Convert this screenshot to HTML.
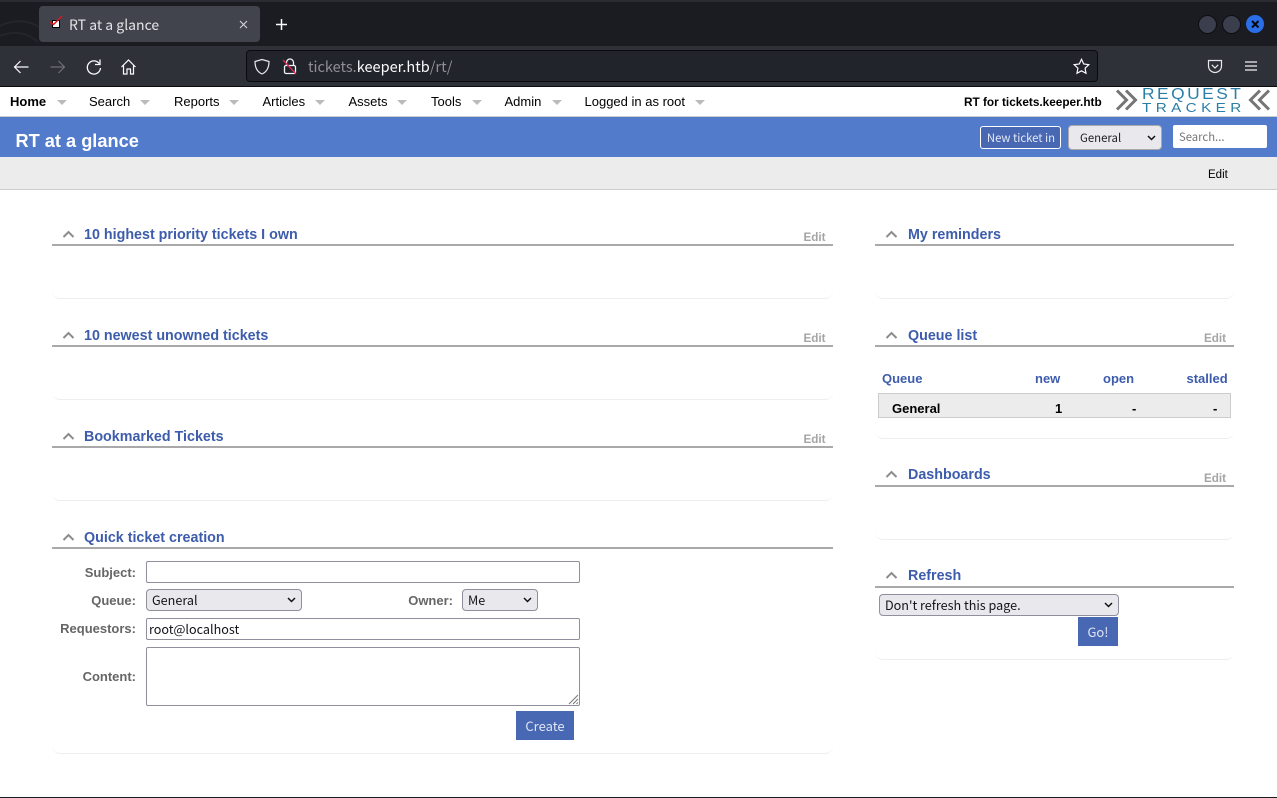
<!DOCTYPE html>
<html lang="en"><head><meta charset="utf-8"><title>RT at a glance</title>
<style>
html,body{margin:0;padding:0;width:1277px;height:798px;overflow:hidden;background:#fff;font-family:"Liberation Sans",Arial,sans-serif}
.a{position:absolute;white-space:nowrap}
.ui{font-family:"Noto Sans CJK JP","Liberation Sans",sans-serif}
a{text-decoration:none;color:inherit}
.nav{top:93px;height:17px;line-height:17px;font-size:13px;color:#000}
.tri{position:absolute;top:100px;width:0;height:0;border-left:5px solid transparent;border-right:5px solid transparent;border-top:5px solid #bbb}
.t{height:18px;line-height:18px;font-size:14.3px;font-weight:bold;color:#3d5cab}
.rule{position:absolute;height:2px;background:#a9a9a9}
.foot{position:absolute;height:10px;border-bottom:1px solid #eee;border-radius:0 0 8px 8px;box-sizing:border-box}
.edit{font-size:11.7px;font-weight:bold;color:#a5a5a5;height:14px;line-height:14px}
.lbl{font-size:13px;font-weight:bold;color:#666;text-align:right;height:16px;line-height:16px}
.f{position:absolute;box-sizing:border-box;border:1px solid #8f8f9d;border-radius:2px;background:#fff;margin:0;padding:0 2px;font:12.6px/18px "Noto Sans CJK JP","Liberation Sans",sans-serif;color:#15141a;outline:none}
select.f{appearance:none;-webkit-appearance:none;background:#e9e9ed;border-radius:4px;padding:0 5px}
.btn{position:absolute;box-sizing:border-box;background:#4868b3;color:#dfe5f3;text-align:center;font:13px/29px "Noto Sans CJK JP","Liberation Sans",sans-serif;border:0;padding:0;margin:0}
.q{font-size:13px;font-weight:bold;height:16px;line-height:16px}
svg{position:absolute;overflow:visible}
</style></head><body>

<!-- Browser chrome -->
<div class="a" style="left:0;top:0;width:1277px;height:46px;background:#1b1c22"></div>
<div class="a" style="left:0;top:0;width:1277px;height:2px;background:#2b2c33"></div>
<svg style="left:0;top:0" width="120" height="46" fill="none" stroke="#24252b" stroke-width="2"><path d="M0 26C14 19 28 20 39 27M0 36C14 30 28 33 38 42"/></svg>
<div class="a" style="left:39px;top:6px;width:221px;height:36px;background:#42444d;border-radius:4px"></div>
<svg style="left:49px;top:15px" width="16" height="16"><rect x="3.500" y="5.500" width="7" height="7" fill="#fff" stroke="#000"/><path d="M1 7l3.500 2.500L13 1" fill="none" stroke="#e0141c" stroke-width="1.500"/></svg>
<div class="a ui" style="left:69px;top:15px;height:20px;line-height:20px;font-size:14px;color:#e4e4e6">RT at a glance</div>
<svg style="left:239px;top:20px" width="10" height="10" stroke="#d5d5d8" stroke-width="1.100"><path d="M1 1l7 7M8 1l-7 7"/></svg>
<svg style="left:275px;top:18px" width="13" height="13" stroke="#fbfbfe" stroke-width="1.500"><path d="M6.500 1v11M1 6.500h11"/></svg>
<div class="a" style="left:1198px;top:15px;width:17px;height:17px;border-radius:50%;background:#3b3f4d;border:1px solid #0d0d11"></div>
<div class="a" style="left:1222px;top:15px;width:17px;height:17px;border-radius:50%;background:#3b3f4d;border:1px solid #0d0d11"></div>
<div class="a" style="left:1246px;top:15px;width:18px;height:18px;border-radius:50%;background:#2a6fe8"></div>
<svg style="left:1251px;top:20px" width="9" height="9" stroke="#06080d" stroke-width="2"><path d="M1 1l6.500 6.500M7.500 1L1 7.500"/></svg>

<!-- Toolbar -->
<div class="a" style="left:0;top:46px;width:1277px;height:40px;background:#2f3138"></div>
<div class="a" style="left:0;top:86px;width:1277px;height:1px;background:#0c0c0d"></div>
<svg style="left:13px;top:58px" width="18" height="18" fill="none" stroke="#fbfbfe" stroke-width="1.200"><path d="M1.500 9h14M7.500 3L1.500 9l6 6"/></svg>
<svg style="left:49px;top:58px" width="18" height="18" fill="none" stroke="#6e6f76" stroke-width="1.200"><path d="M1.500 9h14M9.500 3l6 6-6 6"/></svg>
<svg style="left:85px;top:58px" width="18" height="18" fill="none" stroke="#fbfbfe" stroke-width="1.300"><path d="M14.200 5.500A6.600 6.600 0 1 0 15.500 10"/><path d="M15 1.500v5h-5" stroke-width="1.300"/></svg>
<svg style="left:120px;top:58px" width="18" height="18" fill="none" stroke="#fbfbfe" stroke-width="1.200"><path d="M1.500 9L8.500 2l7 7M3.500 7.500V16h3.500v-5h3.500v5H13.500V7.500"/></svg>
<div class="a" style="left:246px;top:50px;width:852px;height:32px;box-sizing:border-box;background:#22242c;border:1px solid #0b0b0d;border-radius:4px"></div>
<svg style="left:254px;top:58px" width="16" height="17" fill="none" stroke="#e8e8ea" stroke-width="1.200"><path d="M8 1.500L15 3.500C15 10 12.500 14 8 16 3.500 14 1 10 1 3.500z"/></svg>
<svg style="left:282px;top:58px" width="16" height="17" fill="none"><path d="M4.500 7V4.500a3.500 3.500 0 0 1 7 0V7" stroke="#f2f2f4" stroke-width="1.300"/><rect x="2.500" y="7.500" width="11" height="8" rx="1.500" stroke="#f2f2f4" stroke-width="1.300"/><path d="M1 2l13 14" stroke="#e22850" stroke-width="1.300"/></svg>
<div class="a ui" style="left:308px;top:56px;height:22px;line-height:22px;font-size:14.55px;color:#8f8f94">tickets.<span style="color:#fbfbfe">keeper.htb</span>/rt/</div>
<svg style="left:1073px;top:58px" width="17" height="17" fill="none" stroke="#fbfbfe" stroke-width="1.200"><path d="M8.500 1.300l2.200 4.700 5.100.7-3.700 3.500.9 5.100-4.500-2.500-4.500 2.500.9-5.100L1.200 6.700l5.100-.7z"/></svg>
<svg style="left:1207px;top:59px" width="16" height="15" fill="none" stroke="#e8e8ea" stroke-width="1.200"><path d="M1.500 1.500h13V7a6.500 6.500 0 0 1-13 0z"/><path d="M4.800 5.800L8 9l3.200-3.200"/></svg>
<svg style="left:1245px;top:61px" width="12" height="10" stroke="#f0f0f2" stroke-width="1.200"><path d="M0 1h12M0 5h12M0 9h12"/></svg>

<!-- RT top nav -->
<div class="a" style="left:0;top:87px;width:1277px;height:29px;background:#fff"></div>
<div class="a" style="left:0;top:116px;width:1277px;height:1px;background:#ccc"></div>
<a class="a nav" href="#" style="left:10px;font-weight:bold">Home</a><i class="tri" style="left:57px"></i>
<a class="a nav" href="#" style="left:89px">Search</a><i class="tri" style="left:140px"></i>
<a class="a nav" href="#" style="left:174px">Reports</a><i class="tri" style="left:229px"></i>
<a class="a nav" href="#" style="left:262.5px">Articles</a><i class="tri" style="left:315px"></i>
<a class="a nav" href="#" style="left:348.5px">Assets</a><i class="tri" style="left:397px"></i>
<a class="a nav" href="#" style="left:431px">Tools</a><i class="tri" style="left:472px"></i>
<a class="a nav" href="#" style="left:504.5px">Admin</a><i class="tri" style="left:552px"></i>
<a class="a nav" href="#" style="left:584.5px">Logged in as root</a><i class="tri" style="left:695px"></i>
<div class="a" style="left:964px;top:94px;height:16px;line-height:16px;font-size:11.8px;font-weight:bold;color:#000">RT for tickets.keeper.htb</div>
<svg style="left:1115px;top:89px" width="22" height="22" fill="none" stroke="#757575" stroke-width="3"><path d="M2 1.500l9.500 9.500L2 20.500M11 1.500l9.500 9.500L11 20.500"/></svg>
<svg style="left:1249px;top:89px" width="22" height="22" fill="none" stroke="#757575" stroke-width="3"><path d="M20 1.500L10.500 11 20 20.500M11 1.500L1.500 11 11 20.500"/></svg>
<div class="a" style="left:1142px;top:88px;height:14px;line-height:14px;font-size:15.5px;letter-spacing:2.23px;color:#2b7ea8;transform:scaleX(1.12);transform-origin:0 50%">REQUEST</div>
<div class="a" style="left:1142px;top:102px;height:13px;line-height:13px;font-size:12.5px;letter-spacing:3.6px;color:#2b7ea8;transform:scaleX(1.22);transform-origin:0 50%">TRACKER</div>

<!-- Blue header -->
<div class="a" style="left:0;top:117px;width:1277px;height:40px;background:#527bcc"></div>
<div class="a" style="left:15.5px;top:130px;height:22px;line-height:22px;font-size:18.2px;font-weight:bold;color:#fff">RT at a glance</div>
<div class="a ui" style="left:980px;top:126px;width:81px;height:23px;box-sizing:border-box;background:#4868b3;border:1px solid #fff;border-radius:3px;color:#e3e8f5;font-size:11.3px;line-height:22px;padding-left:1px;text-align:center">New ticket in</div>
<select class="f" style="left:1068px;top:125px;width:94px;height:25px;padding:1px 0 0 11px;border-color:#aaa;color:#222;font-size:11.4px"><option>General</option></select>
<svg style="left:1147px;top:135px" width="9" height="6" fill="none" stroke="#111" stroke-width="1.500"><path d="M1 1l3.500 3.500L8 1"/></svg>
<input class="f" style="left:1173px;top:125px;width:94px;height:23px;border:0;padding:0 6px;font-size:11.3px" placeholder="Search...">

<!-- Grey bar -->
<div class="a" style="left:0;top:157px;width:1277px;height:32px;background:#ececec"></div>
<div class="a" style="left:0;top:189px;width:1277px;height:1px;background:#ccc"></div>
<a class="a" href="#" style="left:1208px;top:168px;height:15px;line-height:15px;font-size:11.5px;color:#000">Edit</a>

<!-- Left column -->
<svg style="left:63px;top:230px" width="12" height="8" fill="none" stroke="#8c8c8c" stroke-width="2"><path d="M.5 7l5-5 5 5"/></svg>
<div class="a t" style="left:84px;top:226px">10 highest priority tickets I own</div>
<div class="a edit" style="left:803.5px;top:231px">Edit</div>
<div class="rule" style="left:52px;top:244px;width:781px"></div>
<div class="foot" style="left:52px;top:289px;width:781px"></div>

<svg style="left:63px;top:331px" width="12" height="8" fill="none" stroke="#8c8c8c" stroke-width="2"><path d="M.5 7l5-5 5 5"/></svg>
<div class="a t" style="left:84px;top:327px">10 newest unowned tickets</div>
<div class="a edit" style="left:803.5px;top:332px">Edit</div>
<div class="rule" style="left:52px;top:345px;width:781px"></div>
<div class="foot" style="left:52px;top:390px;width:781px"></div>

<svg style="left:63px;top:432px" width="12" height="8" fill="none" stroke="#8c8c8c" stroke-width="2"><path d="M.5 7l5-5 5 5"/></svg>
<div class="a t" style="left:84px;top:428px">Bookmarked Tickets</div>
<div class="a edit" style="left:803.5px;top:433px">Edit</div>
<div class="rule" style="left:52px;top:446px;width:781px"></div>
<div class="foot" style="left:52px;top:491px;width:781px"></div>

<svg style="left:63px;top:533px" width="12" height="8" fill="none" stroke="#8c8c8c" stroke-width="2"><path d="M.5 7l5-5 5 5"/></svg>
<div class="a t" style="left:84px;top:529px">Quick ticket creation</div>
<div class="rule" style="left:52px;top:547px;width:781px"></div>

<div class="a lbl" style="left:40px;width:96px;top:565px">Subject:</div>
<input class="f" style="left:146px;top:561px;width:434px;height:22px">
<div class="a lbl" style="left:40px;width:96px;top:593px">Queue:</div>
<select class="f" style="left:146px;top:589px;width:156px;height:22px"><option>General</option></select>
<svg style="left:287px;top:597px" width="9" height="6" fill="none" stroke="#111" stroke-width="1.500"><path d="M1 1l3.500 3.500L8 1"/></svg>
<div class="a lbl" style="left:380px;width:73px;top:593px">Owner:</div>
<select class="f" style="left:462px;top:589px;width:76px;height:22px"><option>Me</option></select>
<svg style="left:523px;top:597px" width="9" height="6" fill="none" stroke="#111" stroke-width="1.500"><path d="M1 1l3.500 3.500L8 1"/></svg>
<div class="a lbl" style="left:40px;width:96px;top:621px">Requestors:</div>
<input class="f" style="left:146px;top:618px;width:434px;height:22px;padding-bottom:2px" value="root@localhost">
<div class="a lbl" style="left:40px;width:96px;top:669px">Content:</div>
<textarea class="f" style="left:146px;top:647px;width:434px;height:59px;resize:none"></textarea>
<svg style="left:568px;top:694px" width="11" height="11" stroke="#777" stroke-width="1"><path d="M1 10L10 1M5 10l5-5M8.500 10l1.500-1.500"/></svg>
<button class="btn" style="left:516px;top:711px;width:58px;height:29px">Create</button>
<div class="foot" style="left:52px;top:744px;width:781px"></div>

<!-- Right column -->
<svg style="left:886px;top:230px" width="12" height="8" fill="none" stroke="#8c8c8c" stroke-width="2"><path d="M.5 7l5-5 5 5"/></svg>
<div class="a t" style="left:908px;top:226px">My reminders</div>
<div class="rule" style="left:875px;top:244px;width:359px"></div>
<div class="foot" style="left:875px;top:289px;width:359px"></div>

<svg style="left:886px;top:331px" width="12" height="8" fill="none" stroke="#8c8c8c" stroke-width="2"><path d="M.5 7l5-5 5 5"/></svg>
<div class="a t" style="left:908px;top:327px">Queue list</div>
<div class="a edit" style="left:1204px;top:332px">Edit</div>
<div class="rule" style="left:875px;top:345px;width:359px"></div>
<div class="a q" style="left:882px;top:371px;color:#3d5cab">Queue</div>
<div class="a q" style="left:1035px;top:371px;color:#3d5cab">new</div>
<div class="a q" style="left:1103px;top:371px;color:#3d5cab">open</div>
<div class="a q" style="left:1186.500px;top:371px;color:#3d5cab">stalled</div>
<div class="a" style="left:878px;top:393px;width:353px;height:25px;box-sizing:border-box;background:#ececec;border:1px solid #ccc"></div>
<div class="a q" style="left:892px;top:401px;color:#000">General</div>
<div class="a q" style="left:1055px;top:401px;color:#000">1</div>
<div class="a q" style="left:1132px;top:401px;color:#000">-</div>
<div class="a q" style="left:1213px;top:401px;color:#000">-</div>
<div class="foot" style="left:875px;top:429px;width:359px"></div>

<svg style="left:886px;top:470px" width="12" height="8" fill="none" stroke="#8c8c8c" stroke-width="2"><path d="M.5 7l5-5 5 5"/></svg>
<div class="a t" style="left:908px;top:466px">Dashboards</div>
<div class="a edit" style="left:1204px;top:472px">Edit</div>
<div class="rule" style="left:875px;top:485px;width:359px"></div>
<div class="foot" style="left:875px;top:530px;width:359px"></div>

<svg style="left:886px;top:571px" width="12" height="8" fill="none" stroke="#8c8c8c" stroke-width="2"><path d="M.5 7l5-5 5 5"/></svg>
<div class="a t" style="left:908px;top:567px">Refresh</div>
<div class="rule" style="left:875px;top:586px;width:359px"></div>
<select class="f" style="left:879px;top:594px;width:240px;height:22px"><option>Don't refresh this page.</option></select>
<svg style="left:1104px;top:602px" width="9" height="6" fill="none" stroke="#111" stroke-width="1.500"><path d="M1 1l3.500 3.500L8 1"/></svg>
<button class="btn" style="left:1078px;top:617px;width:40px;height:29px">Go!</button>
<div class="foot" style="left:875px;top:650px;width:359px"></div>

<div class="a" style="left:0;top:797px;width:1277px;height:1px;background:#1c1b22"></div>
</body></html>
